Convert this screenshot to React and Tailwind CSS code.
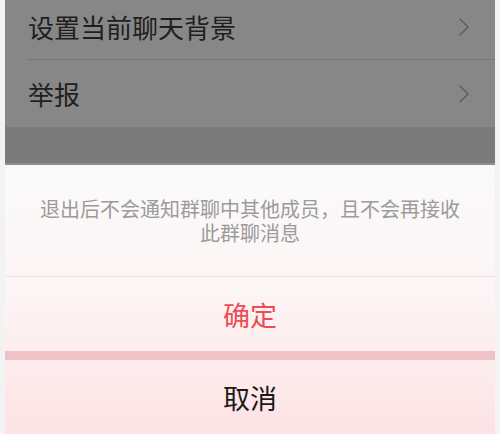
import React from 'react';

const FONT = { fontFamily: '"Noto Sans CJK SC", "Noto Sans", sans-serif' };

function Chevron() {
  return (
    <svg width="12" height="20" viewBox="0 0 12 20" fill="none" className="shrink-0">
      <polyline points="2,2 10,10 2,18" stroke="#5f5f5f" strokeWidth="1.6" strokeLinecap="round" strokeLinejoin="round" />
    </svg>
  );
}

export default function App() {
  return (
    <div className="w-[500px] h-[434px] overflow-hidden bg-[#f3f3f3] px-[5px] flex flex-col" style={FONT}>
      <div className="bg-[#878787] flex flex-col">
        <div className="flex items-center justify-between h-[59px] pb-[6px] pl-[23px] pr-[25px]">
          <span className="text-[26px] leading-none text-[#1f1f1f]">设置当前聊天背景</span>
          <Chevron />
        </div>
        <div className="ml-[23px] h-px bg-[#767676]" />
        <div className="flex items-center justify-between h-[67px] pl-[23px] pr-[25px]">
          <span className="text-[26px] leading-none text-[#1f1f1f]">举报</span>
          <Chevron />
        </div>
        <div className="h-[36px] bg-[#7b7b7b]" />
        <div className="h-[2px] bg-[#8f8f8f]" />
      </div>
      <div className="flex-1 flex flex-col bg-linear-to-b from-[#fafafa] via-[#fdf4f5] to-[#fde2e4]">
        <div className="h-[112px] shrink-0 flex flex-col items-center justify-center border-b border-[#e6e2e2] text-[20px] leading-[24px] text-[#9b9b9b]">
          <p className="whitespace-nowrap">退出后不会通知群聊中其他成员，且不会再接收</p>
          <p className="whitespace-nowrap">此群聊消息</p>
        </div>
        <div className="h-[74px] shrink-0 flex items-center justify-center">
          <span className="text-[27px] text-[#ef4c51] leading-none">确定</span>
        </div>
        <div className="h-[9px] shrink-0 bg-[#efc2c7]" />
        <div className="flex-1 flex items-center justify-center">
          <span className="text-[27px] text-[#1a1a1a] leading-none">取消</span>
        </div>
      </div>
    </div>
  );
}
